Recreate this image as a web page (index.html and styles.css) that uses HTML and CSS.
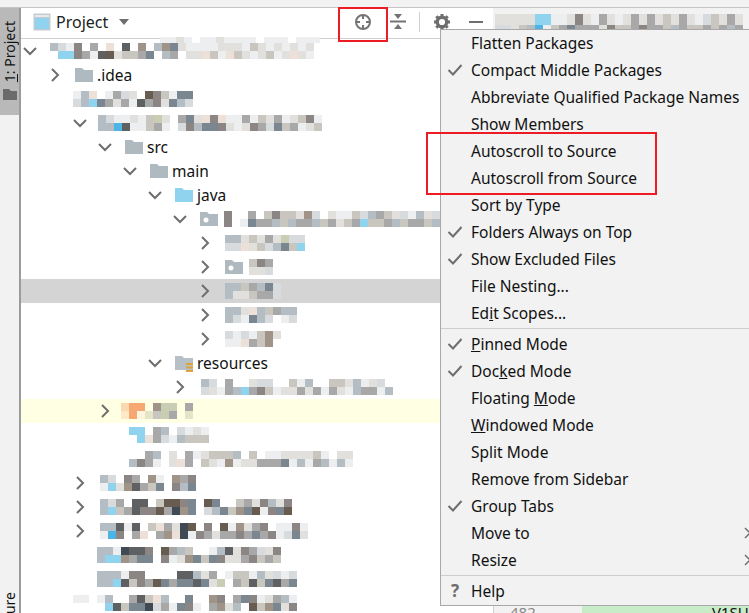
FILE: index.html
```html
<!DOCTYPE html>
<html lang="en">
<head>
<meta charset="utf-8">
<title>Project</title>
<link rel="stylesheet" href="styles.css">
</head>
<body>
<div class="page">
  <div class="topstrip"></div>
  <div class="main">
    <aside class="sidebar">
      <div class="sidetab">
        <span class="sidelabel"><u>1</u>: Project</span>
        <svg class="sidefolder" width="14" height="11" viewBox="0 0 14 11"><path d="M0 0h6l2 2h6v9H0z" fill="#6b6b6b"/></svg>
      </div>
      <div class="sidebottom"><span class="sidelabel">Structure</span></div>
    </aside>
    <section class="panel">
      <header class="panelhead">
        <svg class="headicon" width="18" height="18" viewBox="0 0 18 18"><rect x="0.5" y="0.5" width="17" height="17" fill="#c4cbd0"/><rect x="2" y="5" width="14" height="11" fill="#8fd3ee"/><rect x="2" y="2" width="14" height="2" fill="#e6eaec"/></svg>
        <span class="headtitle">Project</span>
        <svg class="caret" width="12" height="7" viewBox="0 0 12 7"><path d="M1 0h10L6 6z" fill="#6e6e6e"/></svg>
        <div class="tools">
          <svg width="18" height="18" viewBox="0 0 18 18" class="tool-locate"><circle cx="9" cy="9" r="7" fill="none" stroke="#747474" stroke-width="2"/><path d="M9 2v4M9 12v4M2 9h4M12 9h4" stroke="#747474" stroke-width="2"/></svg>
          <svg width="16" height="18" viewBox="0 0 16 18" class="tool-collapse"><path d="M0 8.5h16" stroke="#747474" stroke-width="2"/><path d="M4 1h8L8 6zM4 16h8l-4-5z" fill="#747474"/></svg>
          <span class="toolsep"></span>
          <svg width="18" height="18" viewBox="0 0 18 18" class="tool-gear"><circle cx="9" cy="9" r="4.8" fill="none" stroke="#6e6e6e" stroke-width="3.4"/><path d="M9 1v3M9 14v3M1 9h3M14 9h3M3.3 3.3l2.2 2.2M12.5 12.5l2.2 2.2M14.7 3.3l-2.2 2.2M5.500 12.500l-2.200 2.200" stroke="#6e6e6e" stroke-width="3"/></svg>
          <span class="tool-min"></span>
        </div>
      </header>
      <div class="tree">
        <div class="row l0"><svg class="chev" viewBox="0 0 16 16"><path d="M2 5l6 6 6-6"/></svg><span class="mos m12"><i class="a"></i><i></i><i class="b"></i><i class="h"></i><i class="c"></i><i class="h"></i><i class="d"></i><i class="d"></i><i></i><i class="l"></i><i class="l"></i><i class="c"></i><i></i><i class="e"></i><i class="g"></i><i class="r"></i><i></i><i class="k"></i><i class="e"></i><i class="i"></i><i></i><i class="i"></i><i class="f"></i><i class="l"></i><i></i><i class="j"></i><i class="a"></i><i></i><i class="f"></i><i class="a"></i><i class="j"></i><i class="l"></i><i class="k"></i><i></i><i class="c"></i><i class="k"></i><i class="c"></i><i class="k"></i><i class="c"></i><i class="g"></i><i class="c"></i><i class="i"></i><i class="k"></i><i class="c"></i><i class="k"></i><i class="g"></i><i class="k"></i><i class="i"></i><i class="c"></i><i class="k"></i><i class="i"></i><i class="c"></i><i class="k"></i><i class="k"></i><i class="c"></i><i class="i"></i><i class="k"></i><i class="c"></i><i class="c"></i><i class="k"></i><i class="k"></i><i class="g"></i><i class="c"></i><i class="k"></i><i class="k"></i><i class="c"></i></span></div>
        <div class="row l1"><svg class="chev" viewBox="0 0 16 16"><path d="M5 2l6 6-6 6"/></svg><svg class="ico" viewBox="0 0 18 14"><path d="M0 0h7l2 2h9v12H0z" fill="#aeb9c0"/></svg><span class="lbl">.idea</span></div>
        <div class="row l1"><span class="chev"></span><span class="mos m10"><i class="c"></i><i class="b"></i><i class="a"></i><i class="a"></i><i class="g"></i><i class="h"></i><i></i><i class="j"></i><i class="c"></i><i class="l"></i><i class="l"></i><i class="k"></i><i class="b"></i><i class="l"></i><i class="k"></i><i class="c"></i><i></i><i class="e"></i><i class="r"></i><i class="l"></i><i class="d"></i><i class="d"></i><i class="i"></i><i class="k"></i><i class="c"></i><i class="j"></i><i class="j"></i><i class="a"></i><i class="j"></i><i class="b"></i></span></div>
        <div class="row l2"><svg class="chev" viewBox="0 0 16 16"><path d="M2 5l6 6 6-6"/></svg><span class="mos m10"><i class="a"></i><i class="a"></i><i class="b"></i><i class="a"></i><i class="c"></i><i class="m"></i><i class="c"></i><i class="e"></i><i class="k"></i><i class="c"></i><i class="c"></i><i class="c"></i><i class="i"></i><i class="i"></i><i class="q"></i><i class="l"></i><i class="k"></i><i class="c"></i><i></i><i></i><i class="l"></i><i class="b"></i><i class="j"></i><i class="d"></i><i class="k"></i><i class="a"></i><i class="g"></i><i class="j"></i><i class="d"></i><i class="j"></i><i class="g"></i><i class="d"></i><i class="c"></i><i class="k"></i><i class="c"></i><i class="c"></i><i class="l"></i><i class="k"></i><i class="c"></i><i class="d"></i><i class="i"></i><i class="l"></i><i class="k"></i><i class="b"></i><i class="l"></i><i class="j"></i><i class="c"></i><i class="i"></i><i class="k"></i><i class="l"></i><i class="i"></i><i class="c"></i><i class="d"></i><i class="k"></i><i class="c"></i><i class="i"></i></span></div>
        <div class="row l3"><svg class="chev" viewBox="0 0 16 16"><path d="M2 5l6 6 6-6"/></svg><svg class="ico" viewBox="0 0 18 14"><path d="M0 0h7l2 2h9v12H0z" fill="#aeb9c0"/></svg><span class="lbl">src</span></div>
        <div class="row l4"><svg class="chev" viewBox="0 0 16 16"><path d="M2 5l6 6 6-6"/></svg><svg class="ico" viewBox="0 0 18 14"><path d="M0 0h7l2 2h9v12H0z" fill="#aeb9c0"/></svg><span class="lbl">main</span></div>
        <div class="row l5"><svg class="chev" viewBox="0 0 16 16"><path d="M2 5l6 6 6-6"/></svg><svg class="ico" viewBox="0 0 18 14"><path d="M0 0h7l2 2h9v12H0z" fill="#8fd3ee"/></svg><span class="lbl">java</span></div>
        <div class="row l6"><svg class="chev" viewBox="0 0 16 16"><path d="M2 5l6 6 6-6"/></svg><svg class="ico" viewBox="0 0 18 14"><path d="M0 0h7l2 2h9v12H0z" fill="#aeb9c0"/><circle cx="6" cy="8" r="2.500" fill="#fff"/></svg><span class="mos m5"><i class="d"></i><i class="d"></i><i></i><i></i><i></i><i class="c"></i><i class="l"></i><i class="j"></i><i></i><i class="l"></i><i class="i"></i><i class="l"></i><i class="d"></i><i class="a"></i><i class="i"></i><i class="i"></i><i class="i"></i><i class="a"></i><i class="k"></i><i class="l"></i><i class="f"></i><i class="l"></i><i class="b"></i><i class="a"></i><i></i><i class="i"></i><i class="k"></i><i class="l"></i><i class="c"></i><i class="k"></i><i class="c"></i><i class="i"></i><i class="i"></i><i class="l"></i><i class="b"></i><i class="h"></i><i class="a"></i><i class="i"></i><i class="l"></i><i class="i"></i><i class="i"></i><i class="l"></i><i class="k"></i><i class="a"></i><i class="b"></i><i class="i"></i><i class="c"></i><i class="l"></i><i class="a"></i><i class="l"></i><i class="k"></i><i class="i"></i><i class="b"></i><i class="a"></i></span></div>
        <div class="row l7"><svg class="chev" viewBox="0 0 16 16"><path d="M5 2l6 6-6 6"/></svg><span class="mos m12"><i class="a"></i><i class="b"></i><i class="a"></i><i class="b"></i><i class="k"></i><i class="g"></i><i class="i"></i><i class="k"></i><i class="k"></i><i class="i"></i><i class="l"></i><i class="b"></i><i class="k"></i><i class="a"></i><i class="q"></i><i class="j"></i><i class="b"></i><i class="i"></i><i class="b"></i><i class="h"></i></span></div>
        <div class="row l7"><svg class="chev" viewBox="0 0 16 16"><path d="M5 2l6 6-6 6"/></svg><svg class="ico" viewBox="0 0 18 14"><path d="M0 0h7l2 2h9v12H0z" fill="#aeb9c0"/><circle cx="6" cy="8" r="2.500" fill="#fff"/></svg><span class="mos m5"><i class="i"></i><i class="k"></i><i class="d"></i><i class="k"></i><i class="l"></i><i class="b"></i></span></div>
        <div class="row l7 sel"><svg class="chev" viewBox="0 0 16 16"><path d="M5 2l6 6-6 6"/></svg><span class="mos m12"><i class="a"></i><i class="a"></i><i class="a"></i><i class="k"></i><i class="i"></i><i class="k"></i><i class="l"></i><i class="i"></i><i class="a"></i><i class="l"></i><i class="j"></i><i class="l"></i><i class="b"></i><i class="b"></i></span></div>
        <div class="row l7"><svg class="chev" viewBox="0 0 16 16"><path d="M5 2l6 6-6 6"/></svg><span class="mos m12"><i class="a"></i><i class="a"></i><i class="a"></i><i class="b"></i><i class="k"></i><i class="c"></i><i class="g"></i><i class="j"></i><i class="a"></i><i class="a"></i><i class="i"></i><i class="b"></i><i class="l"></i><i></i><i class="a"></i><i class="c"></i><i class="a"></i><i class="b"></i></span></div>
        <div class="row l7"><svg class="chev" viewBox="0 0 16 16"><path d="M5 2l6 6-6 6"/></svg><span class="mos m12"><i class="b"></i><i class="c"></i><i class="c"></i><i class="c"></i><i class="b"></i><i class="g"></i><i class="c"></i><i class="l"></i><i class="i"></i><i class="i"></i><i class="f"></i><i class="f"></i><i class="k"></i><i></i></span></div>
        <div class="row l5"><svg class="chev" viewBox="0 0 16 16"><path d="M2 5l6 6 6-6"/></svg><svg class="ico res" viewBox="0 0 18 17"><path d="M0 0h7l2 2h9v12H0z" fill="#b6c0c7"/><path d="M11 7h7v2h-7zM11 10.500h7v2h-7zM11 14h7v2h-7z" fill="#dfa13c"/></svg><span class="lbl">resources</span></div>
        <div class="row l6"><svg class="chev" viewBox="0 0 16 16"><path d="M5 2l6 6-6 6"/></svg><span class="mos m13"><i class="a"></i><i class="b"></i><i class="b"></i><i class="k"></i><i></i><i class="c"></i><i class="l"></i><i class="l"></i><i></i><i class="a"></i><i></i><i class="h"></i><i class="k"></i><i class="l"></i><i class="b"></i><i class="d"></i><i class="b"></i><i class="i"></i><i></i><i class="c"></i><i></i><i class="k"></i><i class="i"></i><i class="k"></i><i class="c"></i><i class="l"></i><i class="a"></i><i class="k"></i><i></i><i class="l"></i><i></i><i class="c"></i><i class="i"></i><i class="l"></i><i class="i"></i><i class="k"></i><i class="k"></i><i class="c"></i><i class="a"></i><i class="a"></i><i class="c"></i><i class="l"></i><i class="k"></i><i class="l"></i><i class="b"></i><i class="c"></i><i></i><i class="a"></i></span></div>
        <div class="row l3 warn"><svg class="chev" viewBox="0 0 16 16"><path d="M5 2l6 6-6 6"/></svg><span class="mos m8"><i class="p"></i><i class="s"></i><i class="o"></i><i class="o"></i><i class="o"></i><i class="t"></i><i></i><i class="u"></i><i class="f"></i><i class="i"></i><i class="q"></i><i class="q"></i><i class="q"></i><i class="l"></i><i></i><i></i><i class="l"></i><i class="u"></i></span></div>
        <div class="row l3"><span class="chev"></span><span class="mos m16"><i class="h"></i><i></i><i class="h"></i><i class="h"></i><i></i><i class="g"></i><i class="l"></i><i class="l"></i><i class="a"></i><i class="b"></i><i></i><i class="c"></i><i class="b"></i><i class="a"></i><i class="c"></i><i class="i"></i><i class="k"></i><i class="i"></i><i class="c"></i><i class="i"></i></span></div>
        <div class="row l3"><span class="chev"></span><span class="mos m16"><i></i><i class="a"></i><i></i><i class="d"></i><i class="l"></i><i class="l"></i><i class="a"></i><i class="c"></i><i></i><i></i><i class="k"></i><i class="k"></i><i></i><i class="g"></i><i class="l"></i><i class="l"></i><i class="c"></i><i></i><i class="k"></i><i class="i"></i><i class="i"></i><i class="k"></i><i class="i"></i><i class="c"></i><i class="i"></i><i class="f"></i><i class="a"></i><i class="c"></i><i></i><i class="k"></i><i class="i"></i><i class="k"></i><i></i><i class="l"></i><i class="c"></i><i class="l"></i><i class="c"></i><i class="l"></i><i class="k"></i><i class="j"></i><i class="k"></i><i class="c"></i><i class="k"></i><i class="a"></i><i class="k"></i><i class="c"></i><i class="i"></i><i class="l"></i><i class="c"></i><i class="a"></i><i></i><i class="c"></i><i class="k"></i><i class="a"></i><i class="k"></i><i class="c"></i></span></div>
        <div class="row l2"><svg class="chev" viewBox="0 0 16 16"><path d="M5 2l6 6-6 6"/></svg><span class="mos m12"><i class="a"></i><i class="c"></i><i class="b"></i><i class="h"></i><i></i><i class="k"></i><i class="d"></i><i class="f"></i><i class="l"></i><i class="e"></i><i></i><i class="l"></i><i class="f"></i><i class="i"></i><i class="c"></i><i class="j"></i><i></i><i></i><i class="f"></i><i class="d"></i><i class="l"></i><i class="a"></i><i class="d"></i><i class="j"></i></span></div>
        <div class="row l2"><svg class="chev" viewBox="0 0 16 16"><path d="M5 2l6 6-6 6"/></svg><span class="mos m12"><i class="a"></i><i class="a"></i><i class="b"></i><i class="h"></i><i class="l"></i><i class="i"></i><i></i><i class="l"></i><i class="e"></i><i class="e"></i><i class="e"></i><i class="d"></i><i></i><i class="d"></i><i class="i"></i><i class="r"></i><i class="r"></i><i class="l"></i><i class="r"></i><i class="n"></i><i class="d"></i><i class="f"></i><i class="j"></i><i class="j"></i><i></i><i></i><i class="r"></i><i class="b"></i><i class="j"></i><i class="a"></i><i></i><i class="j"></i><i></i><i class="i"></i><i class="i"></i><i class="f"></i><i class="l"></i><i class="j"></i><i class="k"></i><i class="r"></i><i class="d"></i><i class="c"></i><i class="a"></i><i class="d"></i><i class="k"></i><i class="j"></i><i class="d"></i><i class="r"></i></span></div>
        <div class="row l2"><svg class="chev" viewBox="0 0 16 16"><path d="M5 2l6 6-6 6"/></svg><span class="mos m12"><i class="a"></i><i class="c"></i><i class="a"></i><i class="m"></i><i class="e"></i><i class="d"></i><i class="c"></i><i></i><i class="e"></i><i class="l"></i><i></i><i class="g"></i><i class="i"></i><i></i><i class="g"></i><i class="l"></i><i class="l"></i><i class="f"></i><i class="k"></i><i class="g"></i><i class="n"></i><i class="n"></i><i class="r"></i><i class="c"></i><i></i><i class="d"></i><i class="d"></i><i class="l"></i><i></i><i class="k"></i><i class="r"></i><i class="l"></i><i class="c"></i><i class="l"></i><i class="f"></i><i class="d"></i><i class="k"></i><i class="l"></i><i class="l"></i><i class="j"></i><i class="d"></i><i class="l"></i><i></i><i class="d"></i><i class="c"></i><i class="c"></i><i class="c"></i><i class="b"></i><i class="d"></i><i class="j"></i><i class="c"></i><i class="k"></i></span></div>
        <div class="row l2"><span class="chev"></span><span class="mos m9"><i class="a"></i><i class="a"></i><i class="a"></i><i class="h"></i><i class="c"></i><i class="h"></i><i class="n"></i><i class="f"></i><i class="e"></i><i class="l"></i><i class="e"></i><i class="j"></i><i class="d"></i><i class="j"></i><i></i><i></i><i class="r"></i><i class="d"></i><i class="l"></i><i class="c"></i><i class="a"></i><i class="k"></i><i class="i"></i><i class="f"></i><i></i><i class="j"></i><i></i><i class="i"></i><i class="c"></i><i class="j"></i><i class="a"></i><i class="d"></i><i class="e"></i><i class="k"></i><i class="k"></i><i class="k"></i><i class="d"></i><i class="l"></i><i class="l"></i><i class="d"></i><i class="b"></i><i class="i"></i><i class="k"></i><i class="l"></i><i class="d"></i><i class="i"></i></span></div>
        <div class="row l2"><span class="chev"></span><span class="mos m9"><i class="a"></i><i class="a"></i><i class="a"></i><i class="a"></i><i class="a"></i><i class="h"></i><i class="c"></i><i class="e"></i><i class="d"></i><i class="i"></i><i class="d"></i><i class="d"></i><i></i><i class="l"></i><i></i><i class="r"></i><i></i><i class="j"></i><i></i><i class="l"></i><i class="e"></i><i class="j"></i><i class="e"></i><i class="j"></i><i class="a"></i><i class="e"></i><i class="k"></i><i class="j"></i><i class="l"></i><i class="k"></i><i></i><i class="q"></i><i class="c"></i><i></i><i class="i"></i><i class="l"></i><i class="i"></i><i class="i"></i><i class="c"></i><i class="e"></i><i class="a"></i><i class="i"></i><i class="k"></i><i class="j"></i><i class="b"></i><i class="e"></i><i class="c"></i><i class="l"></i><i class="b"></i><i class="j"></i></span></div>
        <div class="row l1"><span class="chev"></span><span class="mos m10"><i class="c"></i><i></i><i class="c"></i><i></i><i></i><i></i><i class="c"></i><i></i><i class="a"></i><i class="h"></i><i></i><i class="e"></i><i></i><i class="i"></i><i class="l"></i><i class="j"></i><i class="e"></i><i class="j"></i><i class="i"></i><i class="n"></i><i class="g"></i><i class="b"></i><i class="a"></i><i class="l"></i><i></i><i class="c"></i><i></i><i class="j"></i><i class="j"></i><i class="d"></i><i></i><i class="c"></i><i></i><i></i><i class="f"></i><i class="l"></i><i class="d"></i><i class="f"></i><i></i><i class="k"></i><i class="l"></i><i class="a"></i><i class="j"></i><i></i><i class="d"></i><i class="r"></i><i class="c"></i><i class="i"></i><i class="k"></i><i class="f"></i><i class="l"></i><i class="j"></i><i class="a"></i><i class="k"></i><i class="c"></i><i class="d"></i></span></div>
      </div>
    </section>
    <section class="editor">
      <div class="editortabs"><span class="mos tall"><i class="k"></i><i class="b"></i><i class="k"></i><i class="b"></i><i class="k"></i><i class="k"></i><i class="k"></i><i class="i"></i><i class="k"></i><i class="a"></i><i class="h"></i><i class="m"></i><i class="h"></i><i class="c"></i><i class="c"></i><i class="i"></i><i class="c"></i><i class="l"></i><i class="k"></i><i class="j"></i><i class="d"></i><i class="l"></i><i class="k"></i><i class="l"></i><i class="c"></i><i class="l"></i><i class="l"></i><i class="k"></i><i class="k"></i><i class="d"></i><i class="c"></i><i class="i"></i><i class="k"></i><i class="i"></i><i class="l"></i><i class="l"></i><i class="k"></i><i class="d"></i><i class="l"></i><i class="l"></i><i class="k"></i><i class="l"></i><i class="i"></i><i class="i"></i><i class="k"></i><i class="a"></i><i class="l"></i><i class="l"></i><i class="k"></i><i class="i"></i><i class="c"></i><i class="i"></i><i class="b"></i><i class="l"></i><i class="i"></i><i class="i"></i><i class="k"></i><i class="l"></i><i class="l"></i><i class="a"></i><i class="k"></i><i class="l"></i></span></div>
      <div class="editorbottom">
        <span class="gutter">482</span>
        <span class="code">V1SU</span>
      </div>
    </section>
  </div>
  <div class="smudge"><i class="c"></i><i class="c"></i><i class="k"></i><i class="c"></i><i></i><i class="c"></i><i class="c"></i><i class="k"></i><i class="c"></i><i class="c"></i><i class="c"></i><i class="c"></i><i></i><i class="c"></i><i class="c"></i><i class="c"></i><i></i><i class="c"></i><i class="c"></i><i class="c"></i></div>
  <div class="hl hl-locate"></div>
  <nav class="menu">
    <div class="mi"><span class="lead"></span>Flatten Packages</div>
    <div class="mi"><svg class="check" viewBox="0 0 16 14"><path d="M1.500 7l4.500 4.500L14.500 2"/></svg>Compact Middle Packages</div>
    <div class="mi"><span class="lead"></span>Abbreviate Qualified Package Names</div>
    <div class="mi"><span class="lead"></span>Show Members</div>
    <div class="mi"><span class="lead"></span>Autoscroll to Source</div>
    <div class="mi"><span class="lead"></span>Autoscroll from Source</div>
    <div class="mi"><span class="lead"></span>Sort by Type</div>
    <div class="mi"><svg class="check" viewBox="0 0 16 14"><path d="M1.500 7l4.500 4.500L14.500 2"/></svg>Folders Always on Top</div>
    <div class="mi"><svg class="check" viewBox="0 0 16 14"><path d="M1.500 7l4.500 4.500L14.500 2"/></svg>Show Excluded Files</div>
    <div class="mi"><span class="lead"></span>File Nesting...</div>
    <div class="mi"><span class="lead"></span><span>Ed<u>i</u>t Scopes...</span></div>
    <div class="msep"></div>
    <div class="mi"><svg class="check" viewBox="0 0 16 14"><path d="M1.500 7l4.500 4.500L14.500 2"/></svg><span><u>P</u>inned Mode</span></div>
    <div class="mi"><svg class="check" viewBox="0 0 16 14"><path d="M1.500 7l4.500 4.500L14.500 2"/></svg><span>Doc<u>k</u>ed Mode</span></div>
    <div class="mi"><span class="lead"></span><span>Floating <u>M</u>ode</span></div>
    <div class="mi"><span class="lead"></span><span><u>W</u>indowed Mode</span></div>
    <div class="mi"><span class="lead"></span>Split Mode</div>
    <div class="mi"><span class="lead"></span>Remove from Sidebar</div>
    <div class="mi"><svg class="check" viewBox="0 0 16 14"><path d="M1.500 7l4.500 4.500L14.500 2"/></svg>Group Tabs</div>
    <div class="mi"><span class="lead"></span>Move to<svg class="sub" viewBox="0 0 8 12"><path d="M1 1l5 5-5 5"/></svg></div>
    <div class="mi"><span class="lead"></span>Resize<svg class="sub" viewBox="0 0 8 12"><path d="M1 1l5 5-5 5"/></svg></div>
    <div class="msep"></div>
    <div class="mi"><span class="lead help">?</span>Help</div>
  </nav>
  <div class="hl hl-auto"></div>
</div>
</body>
</html>
```

FILE: styles.css
```css
* { box-sizing: border-box; }
html, body { margin: 0; padding: 0; background: #fff; }
body { font-family: "Noto Sans", "Open Sans", sans-serif; font-size: 15.5px; color: #111; }
.page { position: relative; width: 749px; height: 613px; overflow: hidden; display: flex; flex-direction: column; }
.topstrip { height: 8px; flex: none; background: #f2f2f2; border-bottom: 1px solid #c6c6c6; }
.main { flex: 1; display: flex; min-height: 0; }

.sidebar { width: 21px; flex: none; background: #f2f2f2; border-right: 2px solid #9b9b9b; display: flex; flex-direction: column; justify-content: space-between; }
.sidetab { height: 107px; background: #b9b9b9; display: flex; flex-direction: column; align-items: center; padding-top: 13px; gap: 7px; }
.sidelabel { writing-mode: vertical-rl; transform: rotate(180deg); font-size: 14px; line-height: 19px; white-space: nowrap; }
.sidefolder { flex: none; }
.sidebottom { height: 21px; overflow: hidden; display: flex; flex-direction: column; align-items: center; }

.panel { width: 472px; flex: none; display: flex; flex-direction: column; min-height: 0; }
.panelhead { height: 31px; flex: none; border-bottom: 1px solid #cfcfcf; display: flex; align-items: center; padding: 0 0 2px 12px; }
.headicon { flex: none; }
.headtitle { font-size: 16px; margin-left: 5px; color: #222; }
.caret { margin-left: 10px; flex: none; }
.tools { display: flex; align-items: center; margin-left: 224px; }
.tool-locate { flex: none; }
.tool-collapse { flex: none; margin-left: 18px; }
.toolsep { width: 1px; height: 20px; background: #d0d0d0; margin-left: 13px; }
.tool-gear { flex: none; margin-left: 13px; }
.tool-min { width: 14px; height: 2px; background: #6e6e6e; margin-left: 18px; flex: none; }

.tree { flex: 1; min-height: 0; overflow: hidden; }
.row { height: 24px; display: flex; align-items: center; white-space: nowrap; }
.l0 { padding-left: 1px; }
.l1 { padding-left: 26px; }
.l2 { padding-left: 51px; }
.l3 { padding-left: 76px; }
.l4 { padding-left: 101px; }
.l5 { padding-left: 126px; }
.l6 { padding-left: 151px; }
.l7 { padding-left: 176px; }
.sel { background: #d4d4d4; }
.warn { background: #ffffe4; }

.chev { width: 16px; height: 16px; flex: none; display: block; }
.chev path { fill: none; stroke: #6e6e6e; stroke-width: 2; }
.ico { width: 18px; height: 14px; margin-left: 12px; flex: none; overflow: visible; }
.ico.res { height: 17px; margin-top: 2px; }
.lbl { font-size: 15.5px; margin-left: 4px; color: #111; }

.mos { display: inline-grid; grid-auto-flow: column; grid-template-rows: 8px 8px; grid-auto-columns: 8px; flex: none; }
.mos.tall { grid-template-rows: 11px 11px; margin-left: 2px; }
.m5 { margin-left: 6px; }
.m8 { margin-left: 8px; }
.m9 { margin-left: 9px; }
.m10 { margin-left: 10px; }
.m12 { margin-left: 12px; }
.m13 { margin-left: 13px; }
.m16 { margin-left: 16px; }
.a { background: #b3bdc3; }
.b { background: #d7dbde; }
.c { background: #eceeef; }
.d { background: #8b8583; }
.e { background: #5f6062; }
.f { background: #a09488; }
.g { background: #ece0d8; }
.h { background: #8fd3ee; }
.i { background: #c9c5bf; }
.j { background: #7b8790; }
.k { background: #e2e0dc; }
.l { background: #a8a8a8; }
.m { background: #4db5e5; }
.n { background: #3f4a55; }
.o { background: #f7a872; }
.p { background: #fbd9b0; }
.q { background: #c8cdb4; }
.r { background: #685c50; }
.s { background: #fde8c8; }
.t { background: #fdf6dc; }
.u { background: #e4e4c8; }
.v { background: #f6f8e0; }

.smudge { position: absolute; left: 160px; top: 37px; height: 6px; display: grid; grid-auto-flow: column; grid-auto-columns: 8px; background: #fff; }

.editor { flex: 1; min-width: 0; display: flex; flex-direction: column; justify-content: space-between; }
.editortabs { height: 24px; background: #f2f2f2; }
.editorbottom { height: 30px; display: flex; font-size: 15px; }
.gutter { width: 89px; background: #f2f2f2; border-left: 1px solid #d0d0d0; color: #8a8a8a; padding: 19px 0 0 16px; line-height: 20px; }
.code { flex: 1; background: #c8ebc8; padding: 19px 0 0 130px; line-height: 20px; }

.menu { position: absolute; left: 440px; top: 29px; width: 316px; height: 577px; background: #f2f2f2; border: 1px solid #a8a8a8; }
.mi { height: 27px; display: flex; align-items: center; white-space: nowrap; padding: 0 3px 2px 6px; font-size: 15.5px; }
.lead { width: 24px; flex: none; }
.check { width: 16px; height: 14px; flex: none; margin-right: 8px; }
.check path { fill: none; stroke: #6e6e6e; stroke-width: 2; }
.help { font-size: 17px; font-weight: 700; color: #6e6e6e; padding-left: 4px; }
.sub { width: 8px; height: 12px; margin-left: auto; flex: none; }
.sub path { fill: none; stroke: #6e6e6e; stroke-width: 1.500; }
.msep { height: 1px; background: #cfcfcf; margin: 1px 0 2px; }

.hl { position: absolute; border: 2px solid #ed1c24; }
.hl-locate { left: 338px; top: 7px; width: 50px; height: 35px; }
.hl-auto { left: 426px; top: 132px; width: 231px; height: 63px; }
```
